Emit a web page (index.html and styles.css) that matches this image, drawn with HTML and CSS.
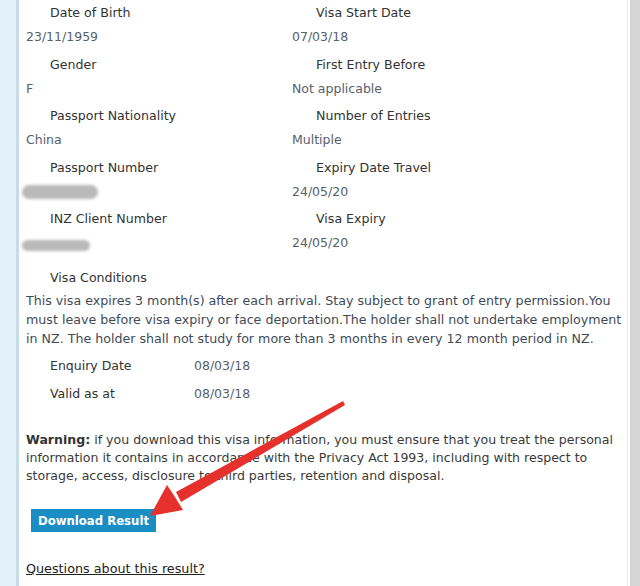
FILE: index.html
```html
<!DOCTYPE html>
<html>
<head>
<meta charset="utf-8">
<link rel="stylesheet" href="styles.css">
</head>
<body>
<div class="frame">
  <div class="side"></div>
  <main class="content">
    <div class="grid">
      <div class="col">
        <div class="field"><div class="label">Date of Birth</div><div class="value">23/11/1959</div></div>
        <div class="field"><div class="label">Gender</div><div class="value">F</div></div>
        <div class="field"><div class="label">Passport Nationality</div><div class="value">China</div></div>
        <div class="field"><div class="label">Passport Number</div><div class="value"><span class="blur blur-a"></span></div></div>
        <div class="field"><div class="label">INZ Client Number</div><div class="value"><span class="blur blur-b"></span></div></div>
      </div>
      <div class="col">
        <div class="field"><div class="label">Visa Start Date</div><div class="value">07/03/18</div></div>
        <div class="field"><div class="label">First Entry Before</div><div class="value">Not applicable</div></div>
        <div class="field"><div class="label">Number of Entries</div><div class="value">Multiple</div></div>
        <div class="field"><div class="label">Expiry Date Travel</div><div class="value">24/05/20</div></div>
        <div class="field"><div class="label">Visa Expiry</div><div class="value">24/05/20</div></div>
      </div>
    </div>
    <div class="label cond-label">Visa Conditions</div>
    <p class="conditions">This visa expires 3 month(s) after each arrival. Stay subject to grant of entry permission.You<br>must leave before visa expiry or face deportation.The holder shall not undertake employment<br>in NZ. The holder shall not study for more than 3 months in every 12 month period in NZ.</p>
    <div class="meta">
      <div class="meta-row"><span class="meta-key">Enquiry Date</span><span class="meta-val">08/03/18</span></div>
      <div class="meta-row"><span class="meta-key">Valid as at</span><span class="meta-val">08/03/18</span></div>
    </div>
    <p class="warning"><b>Warning:</b> if you download this visa information, you must ensure that you treat the personal<br>information it contains in accordance with the Privacy Act 1993, including with respect to<br>storage, access, disclosure to third parties, retention and disposal.</p>
    <div class="actions"><button class="btn">Download Result</button></div>
    <a class="question" href="#">Questions about this result?</a>
  </main>
  <div class="bar"></div>
</div>
<svg class="arrow" width="640" height="586" viewBox="0 0 640 586">
  <polygon points="343,401 345,405 181,502 176,492" fill="#e5302c"/>
  <polygon points="150,516 167,485 175,497 183,510" fill="#e5302c"/>
</svg>
</body>
</html>
```

FILE: styles.css
```css
html, body {
  margin: 0;
  padding: 0;
  background: #fff;
}
body {
  width: 640px;
  height: 586px;
  overflow: hidden;
  font-family: "DejaVu Sans", Verdana, sans-serif;
  color: #333;
}
.frame {
  display: flex;
  height: 586px;
}
.side {
  width: 16px;
  background: #e2f1f8;
  border-right: 3px solid #c9dce6;
  flex: none;
}
.content {
  flex: 1;
  padding-left: 7px;
  border-right: 1px solid #ececec;
  position: relative;
}
.bar {
  width: 10px;
  flex: none;
  background: #d5d5d5;
  margin-left: 2px;
}
.grid {
  display: grid;
  grid-template-columns: 266px 1fr;
}
.field {
  padding: 3px 0 4.5px;
}
.label {
  font-size: 12.6px;
  line-height: 20px;
  padding-left: 24px;
  color: #333;
}
.field .label {
  margin-bottom: 4px;
}
.value {
  font-size: 12.5px;
  line-height: 20px;
  color: #56616d;
  height: 20px;
}
.blur {
  display: inline-block;
  background: #b9b9b9;
  border-radius: 8px;
  filter: blur(1.5px);
  vertical-align: top;
  margin-left: -4px;
}
.blur-a {
  width: 76px;
  height: 14px;
  margin-top: 3px;
}
.blur-b {
  width: 68px;
  height: 11px;
  margin-top: 7px;
}
.cond-label {
  margin-top: 10.5px;
}
.conditions {
  margin: 2.5px 0 0;
  font-size: 12.65px;
  line-height: 19px;
  color: #3f4b58;
}
.meta {
  margin-top: 4.5px;
}
.meta-row {
  display: flex;
  line-height: 28px;
  font-size: 12.5px;
  padding-left: 24px;
}
.meta-key {
  width: 144px;
  color: #333;
}
.meta-val {
  color: #56616d;
}
.warning {
  margin: 23px 0 0;
  font-size: 12.56px;
  line-height: 18px;
  color: #3a3a3a;
}
.warning b {
  color: #333;
}
.actions {
  margin-top: 24px;
  padding-left: 5px;
}
.btn {
  display: block;
  width: 125px;
  height: 23px;
  border: 0;
  padding: 0;
  background: #1a8dc4;
  color: #fff;
  font-family: "DejaVu Sans", Verdana, sans-serif;
  font-weight: bold;
  font-size: 11.7px;
}
.question {
  display: inline-block;
  margin-top: 28px;
  font-size: 12.75px;
  line-height: 18px;
  color: #222;
  text-decoration: underline;
}
.arrow {
  position: absolute;
  left: 0;
  top: 0;
  pointer-events: none;
}
```
